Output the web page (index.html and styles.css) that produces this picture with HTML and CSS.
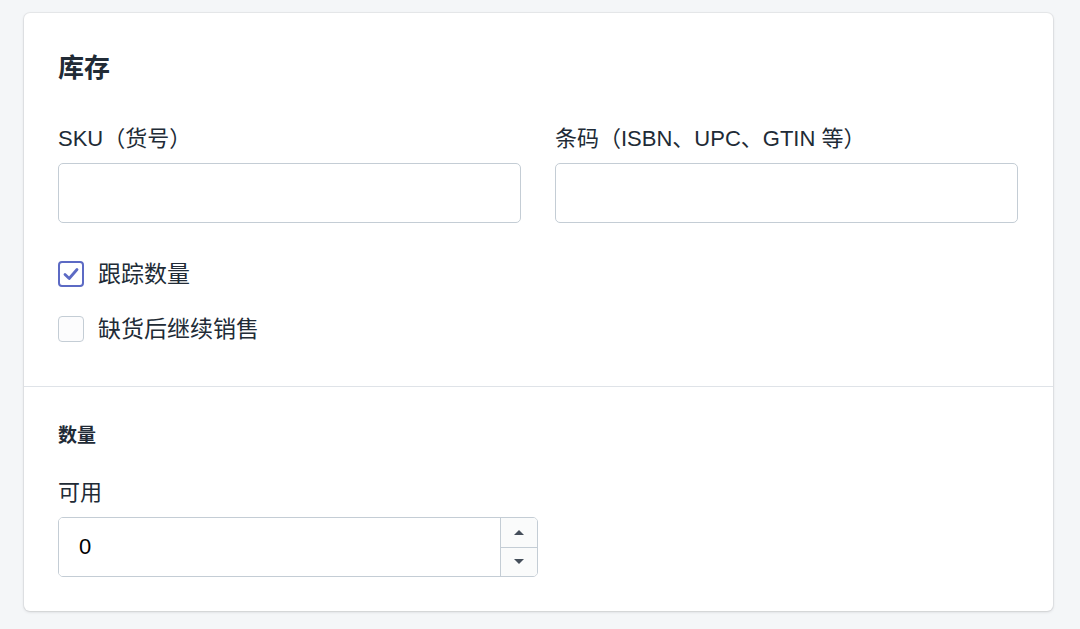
FILE: index.html
```html
<!DOCTYPE html>
<html lang="zh-CN">
<head>
  <meta charset="UTF-8">
  <meta name="viewport" content="width=device-width, initial-scale=1.0">
  <title>库存</title>
  <link rel="stylesheet" href="styles.css">
</head>
<body>

  <div class="card">
    <div class="card-section">
      <h2 class="card-title">库存</h2>

      <div class="field-row">
        <div class="field">
          <label class="field-label" for="sku">SKU（货号）</label>
          <input class="text-input" type="text" id="sku">
        </div>
        <div class="field">
          <label class="field-label" for="barcode">条码（ISBN、UPC、GTIN 等）</label>
          <input class="text-input" type="text" id="barcode">
        </div>
      </div>

      <div class="checks">
        <label class="check-row">
          <span class="check-box checked">
            <svg viewBox="0 0 22 22" width="22" height="22">
              <path d="M5 11.5 L9.2 15.5 L17 6.5" fill="none" stroke="#5c6ac4" stroke-width="2.8" stroke-linecap="round" stroke-linejoin="round"/>
            </svg>
          </span>
          <span class="check-text">跟踪数量</span>
        </label>
        <label class="check-row">
          <span class="check-box"></span>
          <span class="check-text">缺货后继续销售</span>
        </label>
      </div>
    </div>

    <div class="card-section quantity">
      <h3 class="sub-title">数量</h3>
      <label class="field-label" for="available">可用</label>
      <div class="number-input">
        <input class="number-value" type="text" id="available" value="0">
        <div class="spinner">
          <span class="spin-btn"><span class="arrow-up"></span></span>
          <span class="spin-btn"><span class="arrow-down"></span></span>
        </div>
      </div>
    </div>
  </div>

</body>
</html>
```

FILE: styles.css
```css
body {
  margin: 0;
  padding: 13px 27px 19px 24px;
  background-color: #f4f6f8;
  font-family: "Liberation Sans", "Noto Sans CJK SC", sans-serif;
  color: #212b36;
}

.card {
  background-color: #fff;
  border-radius: 6px;
  box-shadow: 0 0 0 1px rgba(63, 63, 68, 0.06), 0 1px 3px rgba(63, 63, 68, 0.18);
}

.card-section {
  padding: 38px 35px 44px 34px;
}

.card-section + .card-section {
  border-top: 1px solid #dfe3e8;
}

.card-title {
  margin: 0 0 39px;
  font-size: 26px;
  line-height: 34px;
  font-weight: 700;
}

.field-row {
  display: grid;
  grid-template-columns: 1fr 1fr;
  gap: 34px;
}

.field {
  display: flex;
  flex-direction: column;
}

.field-label {
  display: block;
  font-size: 22px;
  line-height: 30px;
  margin-bottom: 9px;
}

.text-input {
  box-sizing: border-box;
  height: 60px;
  width: 100%;
  border: 1.5px solid #c4cdd5;
  border-radius: 5px;
  background: #fff;
  font: inherit;
  font-size: 22px;
  padding: 0 20px;
  outline: none;
}

.checks {
  margin-top: 38px;
  display: flex;
  flex-direction: column;
  gap: 29px;
}

.check-row {
  display: flex;
  align-items: center;
  gap: 14px;
  height: 26px;
}

.check-box {
  box-sizing: border-box;
  width: 26px;
  height: 26px;
  border: 1.5px solid #c4cdd5;
  border-radius: 4px;
  background: #fcfcfd;
  display: flex;
  align-items: center;
  justify-content: center;
}

.check-box.checked {
  border: 2px solid #5c6ac4;
  background: #fff;
}

.check-text {
  font-size: 23px;
  line-height: 26px;
}

.quantity {
  padding: 37px 35px 34px 34px;
}

.sub-title {
  margin: 0 0 30px;
  font-size: 19px;
  line-height: 24px;
  font-weight: 700;
}

.number-input {
  box-sizing: border-box;
  width: 480px;
  height: 60px;
  display: flex;
  border: 1.5px solid #c4cdd5;
  border-radius: 5px;
  overflow: hidden;
}

.number-value {
  flex: 1;
  min-width: 0;
  border: none;
  outline: none;
  font: inherit;
  font-size: 22px;
  color: #000;
  padding: 0 20px;
}

.spinner {
  width: 36px;
  display: flex;
  flex-direction: column;
  border-left: 1.5px solid #c4cdd5;
  background: #fafbfb;
}

.spin-btn {
  flex: 1;
  display: flex;
  align-items: center;
  justify-content: center;
}

.spin-btn + .spin-btn {
  border-top: 1.5px solid #c4cdd5;
}

.arrow-up {
  width: 0;
  height: 0;
  border-left: 5px solid transparent;
  border-right: 5px solid transparent;
  border-bottom: 5px solid #454f5b;
}

.arrow-down {
  width: 0;
  height: 0;
  border-left: 5px solid transparent;
  border-right: 5px solid transparent;
  border-top: 5px solid #454f5b;
}
```
